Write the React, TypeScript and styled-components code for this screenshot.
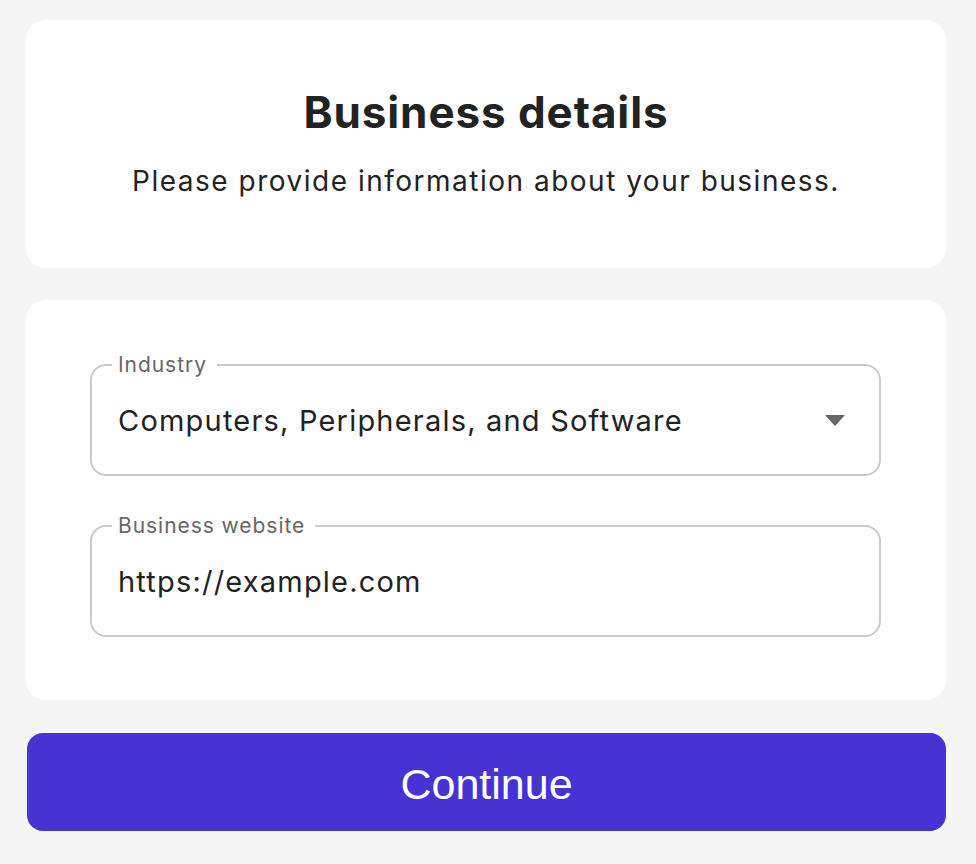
import React from "react";
import styled, { createGlobalStyle } from "styled-components";

const GlobalStyle = createGlobalStyle`
  html, body {
    margin: 0;
    padding: 0;
    background: #f5f5f5;
  }
  body {
    font-family: "Inter", "Noto Sans", sans-serif;
    color: #222;
  }
`;

interface FieldProps {
  label: string;
  value: string;
  select?: boolean;
}

const Field: React.FC<FieldProps> = ({ label, value, select }: FieldProps) => (
  <FieldSet>
    <Legend>{label}</Legend>
    <ValueRow>
      <Value>{value}</Value>
      {select && (
        <svg width="20" height="11" viewBox="0 0 20 11">
          <path d="M0 0 H20 L10 11 Z" fill="#666" />
        </svg>
      )}
    </ValueRow>
  </FieldSet>
);

const App: React.FC = () => (
  <>
    <GlobalStyle />
    <Page>
      <HeaderCard>
        <Title>Business details</Title>
        <SubTitle>Please provide information about your business.</SubTitle>
      </HeaderCard>
      <FormCard>
        <Field
          label="Industry"
          value="Computers, Peripherals, and Software"
          select
        />
        <Field label="Business website" value="https://example.com" />
      </FormCard>
      <Button>Continue</Button>
    </Page>
  </>
);

export default App;

const Page = styled.div`
  width: 920px;
  padding: 20px 0 0 26px;
  display: flex;
  flex-direction: column;
  gap: 32px;
`;

const Card = styled.section`
  background: #fff;
  border-radius: 20px;
  box-sizing: border-box;
`;

const HeaderCard = styled(Card)`
  height: 248px;
  display: flex;
  flex-direction: column;
  align-items: center;
  justify-content: center;
  gap: 27px;
  padding-bottom: 4px;
`;

const Title = styled.h1`
  margin: 0;
  font-size: 44px;
  line-height: 50px;
  font-weight: 700;
  color: #222;
  letter-spacing: 0.9px;
`;

const SubTitle = styled.p`
  margin: 0;
  font-size: 28px;
  line-height: 34px;
  color: #222;
  letter-spacing: 1.5px;
`;

const FormCard = styled(Card)`
  height: 400px;
  padding: 53px 65px 0 64px;
  display: flex;
  flex-direction: column;
  gap: 38px;
`;

const FieldSet = styled.fieldset`
  margin: 0;
  padding: 0 26px 0 26px;
  border: 2px solid #cbcbcb;
  border-radius: 16px;
  min-width: 0;
`;

const Legend = styled.legend`
  padding: 0 10px 0 6px;
  margin-left: -6px;
  font-size: 21px;
  line-height: 24px;
  color: #666;
  letter-spacing: 0.95px;
`;

const ValueRow = styled.div`
  height: 97px;
  box-sizing: border-box;
  padding: 0 8px 10px 0;
  display: flex;
  align-items: center;
  justify-content: space-between;
`;

const Value = styled.span`
  font-size: 29px;
  color: #222;
  letter-spacing: 1.2px;
`;

const Button = styled.button`
  height: 98px;
  margin-top: 1px;
  margin-left: 1px;
  padding-top: 6px;
  border: none;
  border-radius: 16px;
  background: #4733d3;
  color: #fff;
  font-family: "Liberation Sans", Arial, sans-serif;
  font-size: 43px;
  cursor: pointer;
`;
